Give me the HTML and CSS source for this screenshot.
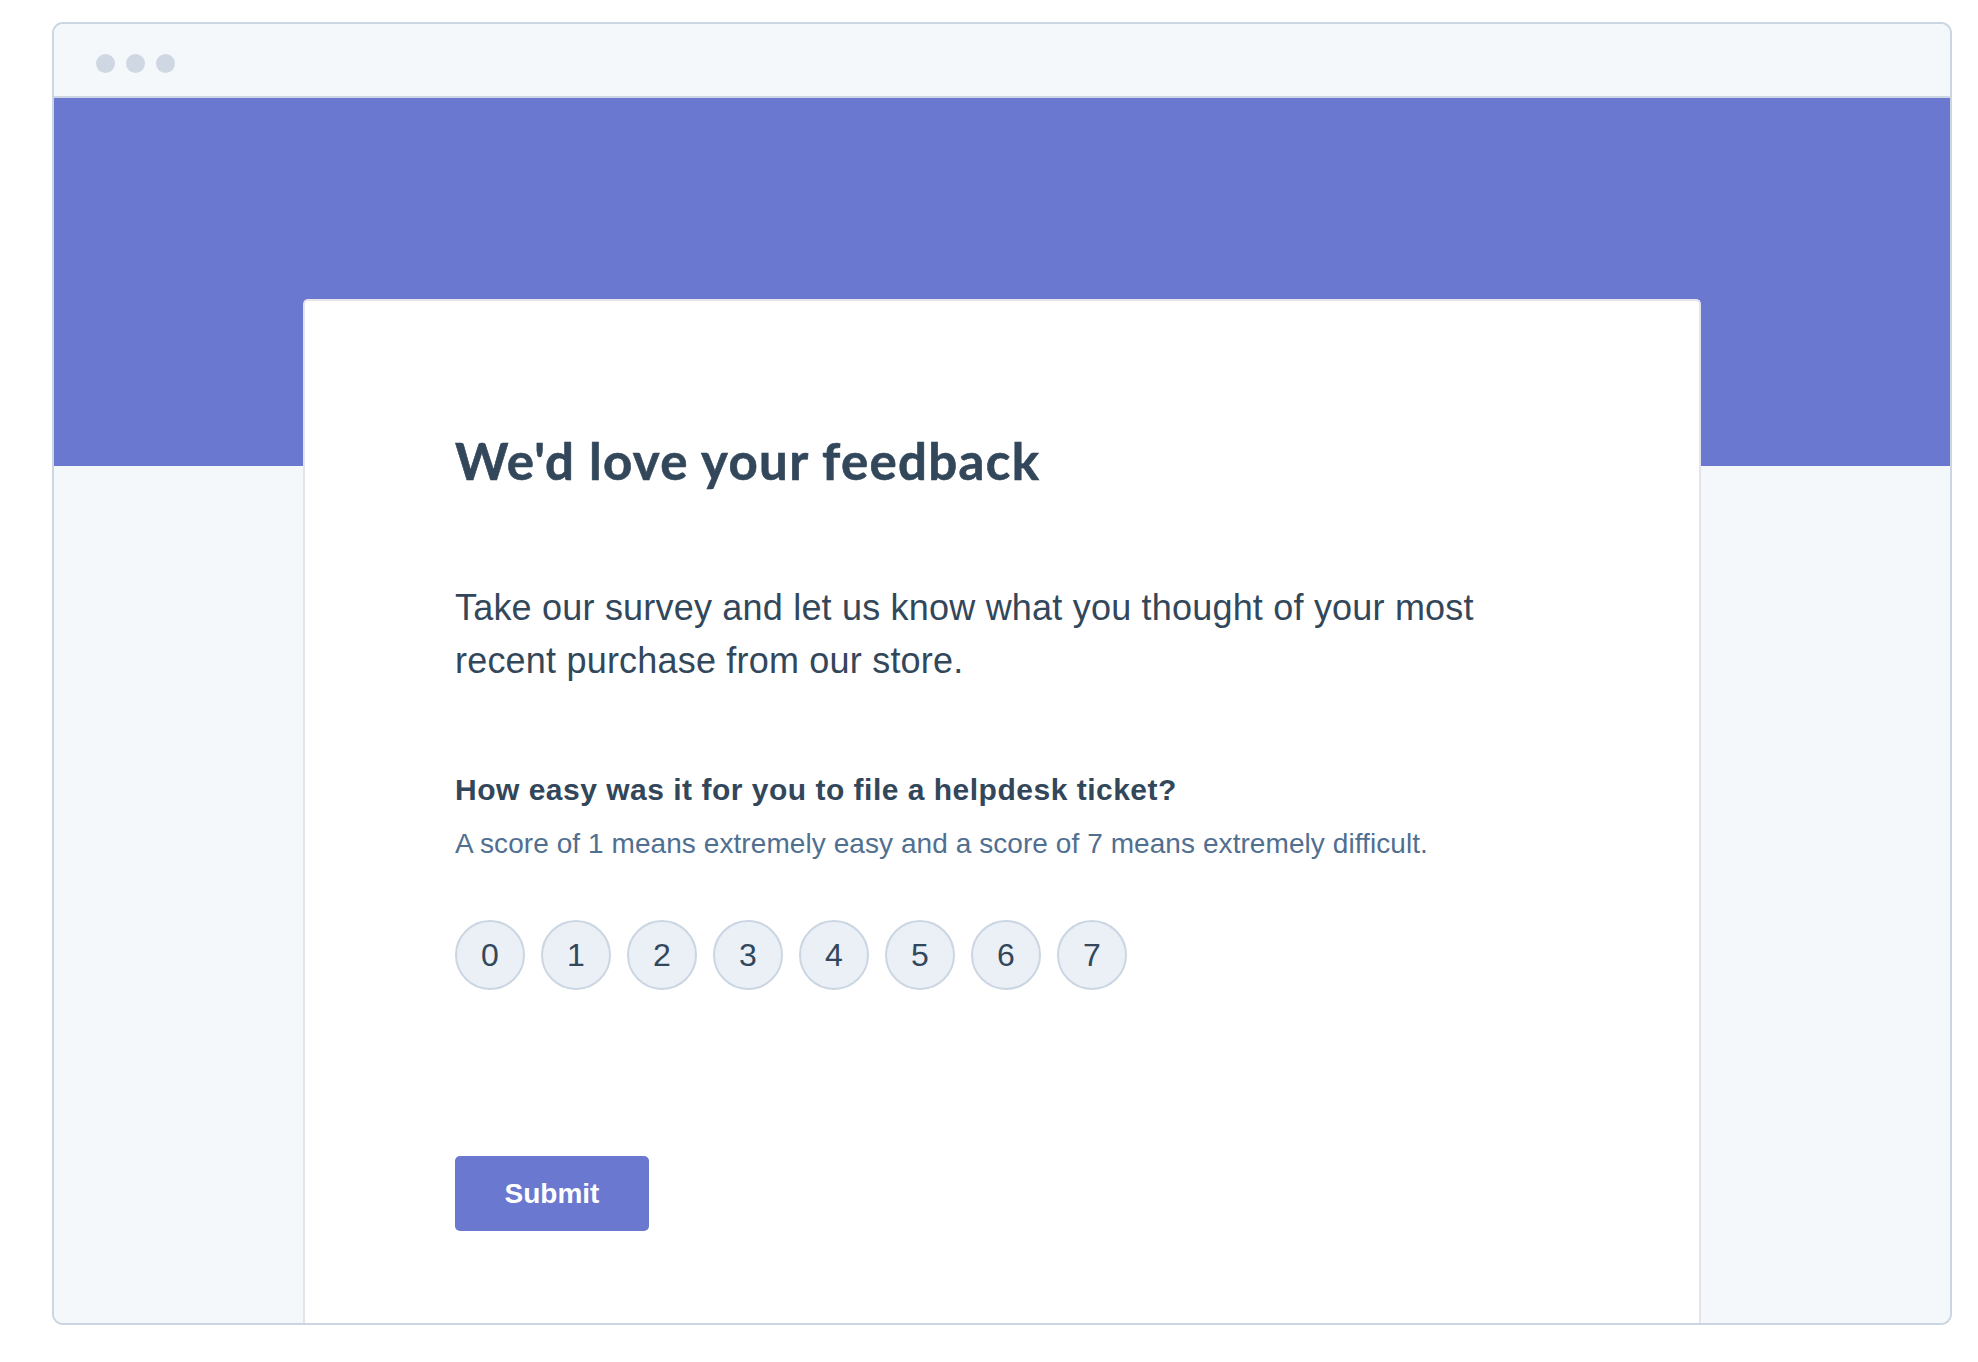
FILE: index.html
```html
<!DOCTYPE html>
<html lang="en">
<head>
<meta charset="utf-8">
<title>Feedback survey</title>
<link rel="stylesheet" href="styles.css">
</head>
<body>
<div class="frame">
  <div class="frame-bar">
    <span class="dot"></span><span class="dot"></span><span class="dot"></span>
  </div>
  <div class="frame-body">
    <div class="card">
      <h1 class="title">We'd love your feedback</h1>
      <p class="intro">Take our survey and let us know what you thought of your most recent purchase from our store.</p>
      <div class="question">
        <div class="q-label">How easy was it for you to file a helpdesk ticket?</div>
        <div class="q-help">A score of 1 means extremely easy and a score of 7 means extremely difficult.</div>
        <div class="scale">
          <button class="score">0</button>
          <button class="score">1</button>
          <button class="score">2</button>
          <button class="score">3</button>
          <button class="score">4</button>
          <button class="score">5</button>
          <button class="score">6</button>
          <button class="score">7</button>
        </div>
      </div>
      <button class="submit">Submit</button>
    </div>
  </div>
</div>
</body>
</html>
```

FILE: styles.css
```css
html, body {
  margin: 0;
  padding: 0;
  background: #ffffff;
}

body {
  padding: 22px 0 0 52px;
  font-family: "Liberation Sans", Arial, Helvetica, sans-serif;
  color: #33475b;
}

.frame {
  box-sizing: border-box;
  width: 1900px;
  height: 1303px;
  border: 2px solid #cbd6e2;
  border-radius: 11px;
  overflow: hidden;
  display: flex;
  flex-direction: column;
  background: #f5f8fa;
}

.frame-bar {
  box-sizing: border-box;
  height: 74px;
  flex: 0 0 74px;
  border-bottom: 2px solid #cbd6e2;
  background: #f5f8fa;
  display: flex;
  gap: 11px;
  padding: 30px 0 0 42px;
}

.dot {
  width: 19px;
  height: 19px;
  border-radius: 50%;
  background: #cfd7e2;
}

.frame-body {
  flex: 1;
  display: flex;
  justify-content: center;
  padding-top: 201px;
  background: linear-gradient(to bottom, #6b78cf 0, #6b78cf 368px, #f5f8fa 368px);
}

.card {
  box-sizing: border-box;
  width: 1398px;
  background: #ffffff;
  border: 2px solid #e6e3ea;
  border-bottom: none;
  border-radius: 5px 5px 0 0;
  padding: 130px 150px 0 150px;
}

.title {
  margin: 0;
  font-family: Lato, "Open Sans", sans-serif;
  font-weight: 700;
  font-size: 51px;
  line-height: 60px;
  color: #33475b;
  letter-spacing: 1.3px;
  -webkit-text-stroke: 0.6px #33475b;
}

.intro {
  margin: 90px 0 0 0;
  max-width: 1060px;
  font-size: 36px;
  line-height: 53px;
  letter-spacing: 0.2px;
  color: #33475b;
}

.question {
  margin-top: 85px;
}

.q-label {
  font-weight: 700;
  font-size: 30px;
  line-height: 36px;
  letter-spacing: 0.5px;
  color: #33475b;
}

.q-help {
  margin-top: 18px;
  font-size: 28px;
  line-height: 36px;
  letter-spacing: 0.07px;
  color: #516f90;
}

.scale {
  display: flex;
  gap: 16px;
  margin-top: 58px;
}

.score {
  box-sizing: border-box;
  width: 70px;
  height: 70px;
  border-radius: 50%;
  border: 2px solid #cbd6e2;
  background: #eaf0f6;
  color: #33475b;
  font-family: "Liberation Sans", Arial, sans-serif;
  font-size: 32px;
  padding: 0;
  display: flex;
  align-items: center;
  justify-content: center;
}

.submit {
  display: block;
  margin-top: 166px;
  width: 194px;
  height: 75px;
  border: none;
  border-radius: 5px;
  background: #6b78cf;
  color: #ffffff;
  font-family: "Liberation Sans", Arial, sans-serif;
  font-weight: 700;
  font-size: 28px;
  padding: 0;
}
```
